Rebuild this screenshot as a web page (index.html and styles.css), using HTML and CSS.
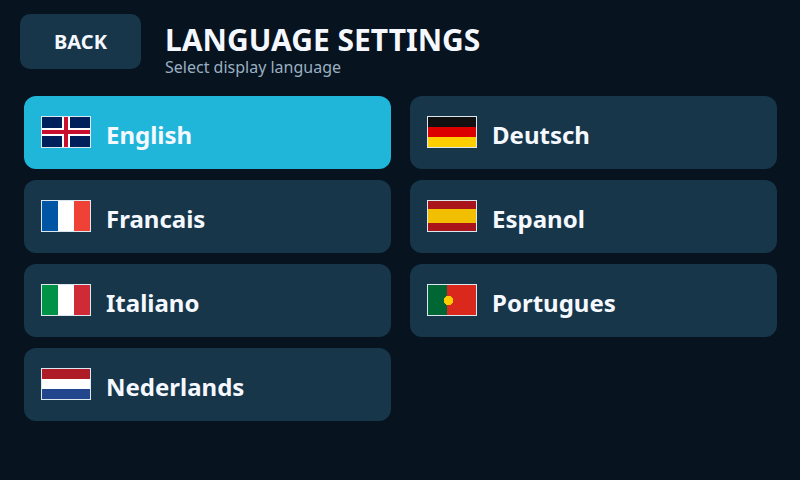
FILE: index.html
```html
<!DOCTYPE html>
<html lang="en">

<head>
    <meta charset="utf-8">
    <title>Language Settings</title>
    <link rel="stylesheet" href="styles.css">
</head>

<body>
    <!-- Top bar -->
    <div class="header">
        <button class="back-btn">BACK</button>
        <div class="titles">
            <h1>LANGUAGE SETTINGS</h1>
            <p>Select display language</p>
        </div>
    </div>

    <!-- Language list -->
    <div class="lang-grid">
        <div class="lang-btn selected">
            <svg class="flag" viewBox="0 0 48 30" shape-rendering="crispEdges">
                <rect width="48" height="30" fill="#00205b" />
                <rect x="20" width="8" height="30" fill="#fff" />
                <rect y="11" width="48" height="8" fill="#fff" />
                <rect x="22" width="4" height="30" fill="#c8102e" />
                <rect y="13" width="48" height="4" fill="#c8102e" />
            </svg>
            <span>English</span>
        </div>
        <div class="lang-btn">
            <svg class="flag" viewBox="0 0 48 30" shape-rendering="crispEdges">
                <rect width="48" height="10" fill="#111" />
                <rect y="10" width="48" height="10" fill="#dd0000" />
                <rect y="20" width="48" height="10" fill="#ffce00" />
            </svg>
            <span>Deutsch</span>
        </div>
        <div class="lang-btn">
            <svg class="flag" viewBox="0 0 48 30" shape-rendering="crispEdges">
                <rect width="16" height="30" fill="#0055a4" />
                <rect x="16" width="16" height="30" fill="#fff" />
                <rect x="32" width="16" height="30" fill="#ef4135" />
            </svg>
            <span>Francais</span>
        </div>
        <div class="lang-btn">
            <svg class="flag" viewBox="0 0 48 30" shape-rendering="crispEdges">
                <rect width="48" height="8" fill="#aa151b" />
                <rect y="8" width="48" height="14" fill="#f1bf00" />
                <rect y="22" width="48" height="8" fill="#aa151b" />
            </svg>
            <span>Espanol</span>
        </div>
        <div class="lang-btn">
            <svg class="flag" viewBox="0 0 48 30" shape-rendering="crispEdges">
                <rect width="16" height="30" fill="#009246" />
                <rect x="16" width="16" height="30" fill="#fff" />
                <rect x="32" width="16" height="30" fill="#ce2b37" />
            </svg>
            <span>Italiano</span>
        </div>
        <div class="lang-btn">
            <svg class="flag" viewBox="0 0 48 30" shape-rendering="crispEdges">
                <rect width="19" height="30" fill="#006633" />
                <rect x="19" width="29" height="30" fill="#da291c" />
                <circle cx="20.5" cy="15.5" r="4.7" fill="#ffcc00" />
            </svg>
            <span>Portugues</span>
        </div>
        <div class="lang-btn">
            <svg class="flag" viewBox="0 0 48 30" shape-rendering="crispEdges">
                <rect width="48" height="10" fill="#ae1c28" />
                <rect y="10" width="48" height="10" fill="#fff" />
                <rect y="20" width="48" height="10" fill="#21468b" />
            </svg>
            <span>Nederlands</span>
        </div>
    </div>
</body>

</html>
```

FILE: styles.css
```css
body {
    background-color: #07131f;
    color: #f5f9ff;
    font-family: "Noto Sans", sans-serif;
    margin: 0;
    padding: 14px 23px 0 20px;
    height: 480px;
    box-sizing: border-box;
    overflow: hidden;
}

.header {
    display: flex;
    gap: 24px;
    height: 82px;
}

.back-btn {
    width: 121px;
    height: 55px;
    border: none;
    border-radius: 10px;
    background-color: #17364a;
    color: #f5f9ff;
    font-family: inherit;
    font-size: 20px;
    font-weight: 700;
}

.titles {
    padding-top: 8px;
}

h1 {
    margin: 0;
    font-size: 30px;
    line-height: 36px;
    font-weight: 700;
}

.titles p {
    margin: 0;
    font-size: 16px;
    line-height: 18px;
    color: #9ab0c0;
}

.lang-grid {
    display: grid;
    grid-template-columns: 367px 367px;
    grid-auto-rows: 73px;
    column-gap: 19px;
    row-gap: 11px;
    margin-left: 4px;
}

.lang-btn {
    display: flex;
    align-items: center;
    gap: 15px;
    padding-left: 17px;
    padding-top: 4px;
    box-sizing: border-box;
    border-radius: 12px;
    background-color: #17364a;
    font-size: 24px;
    font-weight: 700;
}

.lang-btn.selected {
    background-color: #20b6da;
}

.flag {
    width: 50px;
    height: 32px;
    box-sizing: border-box;
    border: 1px solid #dce8f0;
    flex-shrink: 0;
    margin-top: -5px;
}
```
